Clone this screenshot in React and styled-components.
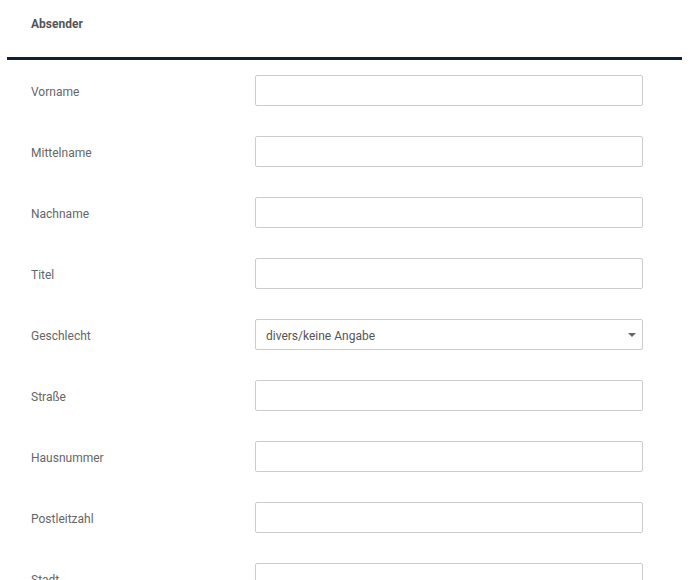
import styled, { createGlobalStyle } from 'styled-components';

const GlobalStyle = createGlobalStyle`
  html, body {
    margin: 0;
    padding: 0;
    background: #ffffff;
    font-family: Roboto, "Liberation Sans", Arial, sans-serif;
  }
`;

const fields = [
  { label: 'Vorname' },
  { label: 'Mittelname' },
  { label: 'Nachname' },
  { label: 'Titel' },
  { label: 'Geschlecht', select: 'divers/keine Angabe' },
  { label: 'Straße' },
  { label: 'Hausnummer' },
  { label: 'Postleitzahl' },
  { label: 'Stadt' },
];

export default function App() {
  return (
    <>
      <GlobalStyle />
      <StyledPage>
        <StyledHeader>
          <h2>Absender</h2>
        </StyledHeader>
        <StyledForm>
          {fields.map((f) => (
            <StyledRow key={f.label}>
              <StyledLabel>{f.label}</StyledLabel>
              {f.select ? (
                <StyledSelect>
                  <span>{f.select}</span>
                  <svg width="8" height="4" viewBox="0 0 8 4">
                    <path d="M0 0 L8 0 L4 4 Z" fill="#666" />
                  </svg>
                </StyledSelect>
              ) : (
                <StyledInput type="text" />
              )}
            </StyledRow>
          ))}
        </StyledForm>
      </StyledPage>
    </>
  );
}

const StyledPage = styled.div`
  width: 698px;
  height: 580px;
  overflow: hidden;
`;

const StyledHeader = styled.div`
  margin: 0 16px 0 7px;
  padding: 17px 0 0 24px;
  height: 40px;
  border-bottom: 3px solid #0e2233;

  h2 {
    margin: 0;
    font-size: 12px;
    line-height: 14px;
    font-weight: 700;
    color: #555555;
  }
`;

const StyledForm = styled.div`
  padding: 15px 55px 0 31px;
  display: flex;
  flex-direction: column;
  gap: 30px;
`;

const StyledRow = styled.div`
  display: grid;
  grid-template-columns: 224px 1fr;
  align-items: center;
  height: 31px;
`;

const StyledLabel = styled.label`
  font-size: 12px;
  color: #666666;
  padding-top: 2px;
`;

const StyledInput = styled.input`
  box-sizing: border-box;
  width: 100%;
  height: 31px;
  margin: 0;
  border: 1px solid #cccccc;
  border-radius: 2px;
  background: #ffffff;
  outline: none;
`;

const StyledSelect = styled.div`
  box-sizing: border-box;
  width: 100%;
  height: 31px;
  border: 1px solid #cccccc;
  border-radius: 2px;
  display: flex;
  align-items: center;
  justify-content: space-between;
  padding: 2px 6px 0 10px;
  font-size: 12px;
  color: #555555;

  svg {
    margin-bottom: 1px;
  }
`;
